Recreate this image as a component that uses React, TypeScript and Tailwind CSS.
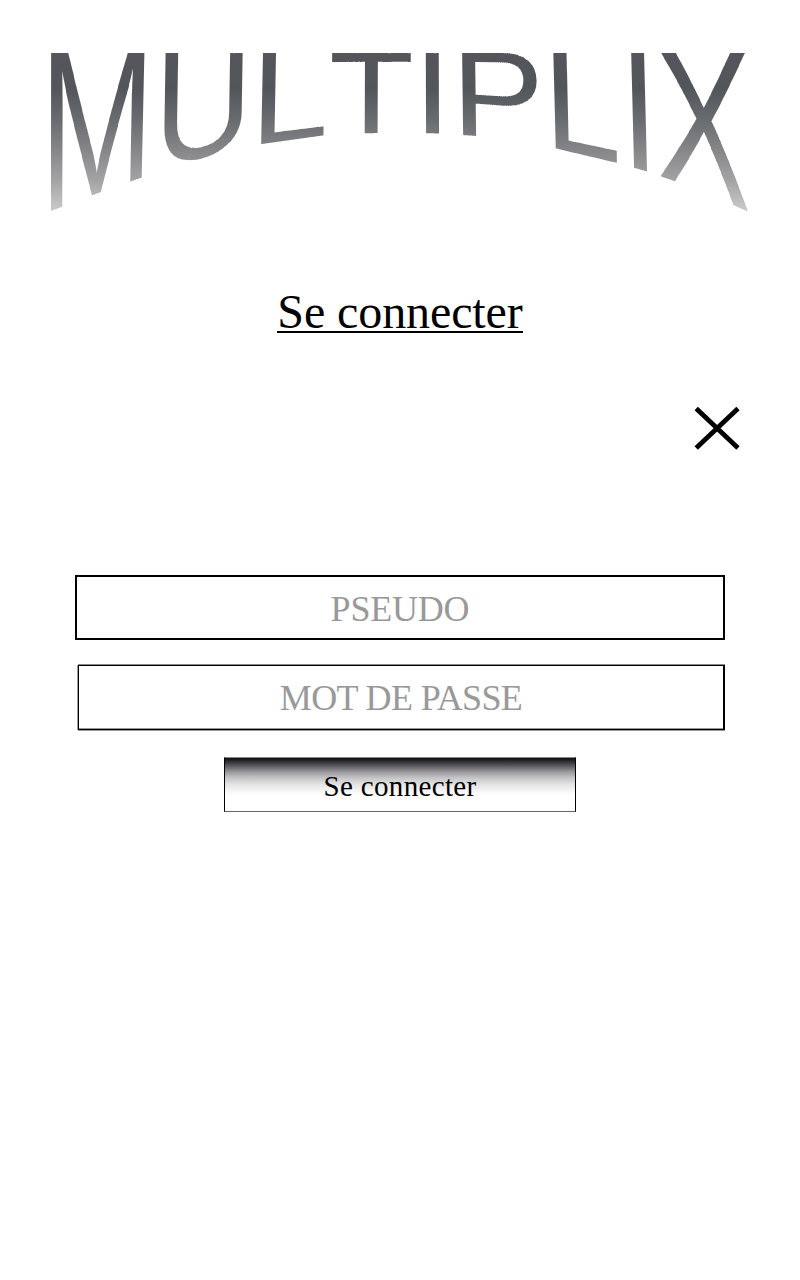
import React from "react";

type Glyph = { char: string; x: number; from: number; to: number; leanFrom: number; leanTo: number; stretch: number };

const CAP = 95.6;
// A trace of rotation keeps each slice of lettering on fractional baselines.
const TILT = 0.001;

const GLYPHS: Glyph[] = [
  { char: "M", x: 39.8, from: 46, to: 152, leanFrom: 0, leanTo: -0.024, stretch: 1.003 },
  { char: "U", x: 155, from: 156, to: 250, leanFrom: -0.016, leanTo: -0.016, stretch: 0.978 },
  { char: "L", x: 251.6, from: 254, to: 329, leanFrom: -0.022, leanTo: -0.01, stretch: 1 },
  { char: "T", x: 329, from: 329, to: 415, leanFrom: -0.003, leanTo: -0.003, stretch: 1 },
  { char: "I", x: 413, from: 420, to: 446, leanFrom: 0.004, leanTo: 0.004, stretch: 1 },
  { char: "P", x: 450.8, from: 455, to: 545, leanFrom: 0.012, leanTo: 0.012, stretch: 1 },
  { char: "L", x: 541.9, from: 547, to: 625, leanFrom: 0.027, leanTo: 0.012, stretch: 1.01 },
  { char: "I", x: 618.4, from: 626, to: 652, leanFrom: 0.025, leanTo: 0.025, stretch: 1 },
  { char: "X", x: 654.9, from: 653, to: 754, leanFrom: 0.02, leanTo: 0.0, stretch: 1.033 },
];

// Height of the lettering at a given x: [x, height]
const ARC: [number, number][] = [
  [40, 163], [51, 158], [97, 140.5], [142, 124.5], [185, 108.5], [225, 98], [262, 91], [323, 82.5], [364, 80.3],
  [400, 79.8], [440, 80.5], [477, 83], [520, 88.5], [556, 95.5], [617, 110], [647, 118.5], [677, 129], [733, 152], [760, 164],
];

function arcHeight(x: number): number {
  for (let i = 1; i < ARC.length; i++) {
    if (x <= ARC[i][0]) {
      const [x0, h0] = ARC[i - 1];
      const [x1, h1] = ARC[i];
      return h0 + ((h1 - h0) * (x - x0)) / (x1 - x0);
    }
  }
  return ARC[ARC.length - 1][1];
}

function Logo() {
  return (
    <svg role="img" aria-label="MULTIPLIX" viewBox="0 0 800 170" className="isolate block h-[170px] w-[800px] bg-white">
      <defs>
        <linearGradient id="steel" gradientUnits="userSpaceOnUse" x1="0" y1="0" x2="0" y2="160">
          <stop offset="0" stopColor="#55555b" />
          <stop offset="0.22" stopColor="#52565a" />
          <stop offset="0.4" stopColor="#66696d" />
          <stop offset="0.6" stopColor="#858588" />
          <stop offset="0.8" stopColor="#a4a4a5" />
          <stop offset="1" stopColor="#cdcdce" />
        </linearGradient>
        {GLYPHS.map((g, i) => (
          <text
            key={i}
            id={`glyph-${i}`}
            x={g.x / g.stretch}
            y={CAP}
            fontSize={139}
            transform={`scale(${g.stretch} 1)`}
            textRendering="geometricPrecision"
            className="font-['Liberation_Sans',sans-serif]"
          >
            {g.char}
          </text>
        ))}
      </defs>
      {GLYPHS.map((g, i) =>
        Array.from({ length: g.to - g.from }, (_, n) => {
          const x = g.from + n;
          const scale = arcHeight(x + 0.5) / CAP;
          const lean = g.leanFrom + ((g.leanTo - g.leanFrom) * n) / (g.to - g.from);
          return (
            <svg key={`${i}-${n}`} x={x} y={0} width={1} height={170} viewBox={`${x} 0 1 170`}>
              <use href={`#glyph-${i}`} transform={`matrix(1 ${TILT} ${lean * scale} ${scale} 0 ${-TILT * x})`} />
            </svg>
          );
        }),
      )}
      <rect width="800" height="170" fill="url(#steel)" className="mix-blend-screen" />
    </svg>
  );
}

export default function App() {
  return (
    <main className="flex min-h-[1280px] w-[800px] flex-col items-center bg-white pt-[53px] font-['Liberation_Serif',serif] text-black">
      <Logo />
      <h1 className="mt-[61px] h-[52px] whitespace-nowrap text-[48px] leading-[56px] tracking-[-0.1px]">
        <span className="block h-[49px] border-b-2 border-black">Se connecter</span>
      </h1>
      <div className="mt-[69px] flex w-full justify-end pr-[59px]">
        <button type="button" aria-label="Fermer" className="h-[46px] w-[48px]">
          <svg viewBox="0 0 48 46" className="block h-[46px] w-[48px]" stroke="#000" strokeWidth="4.8">
            <path d="M3.2 3.5 45 43 M45 3.5 3.2 43" />
          </svg>
        </button>
      </div>
      <form className="mt-[124px] flex w-[650px] flex-col items-end">
        <input
          type="text"
          placeholder="PSEUDO"
          className="h-[65px] w-[650px] rounded-none border-2 border-black pt-[3px] text-center text-[36px] tracking-[-0.2px] outline-none placeholder:text-[#999999] placeholder:opacity-100"
        />
        <input
          type="password"
          placeholder="MOT DE PASSE"
          className="mt-[25px] h-[65px] w-[647px] rounded-none border border-r-2 border-black pt-px text-center text-[36px] tracking-[-0.65px] shadow-[-1px_0_#999,0_-1px_#888,0_1px_#999,inset_0_-1px_#999] outline-none placeholder:text-[#999999] placeholder:opacity-100"
        />
        <button
          type="button"
          className="mt-[27px] h-[55px] w-[352px] self-center border border-x-black border-t-[#888] border-b-[#666] bg-[linear-gradient(#0c0c0c,#505055_13%,#98969b_26%,#c6c6c8_38%,#e6e6e6_51%,#fff_70%)] pt-[3px] text-[29px] leading-[50px] tracking-[0.35px]"
        >
          Se connecter
        </button>
      </form>
    </main>
  );
}
